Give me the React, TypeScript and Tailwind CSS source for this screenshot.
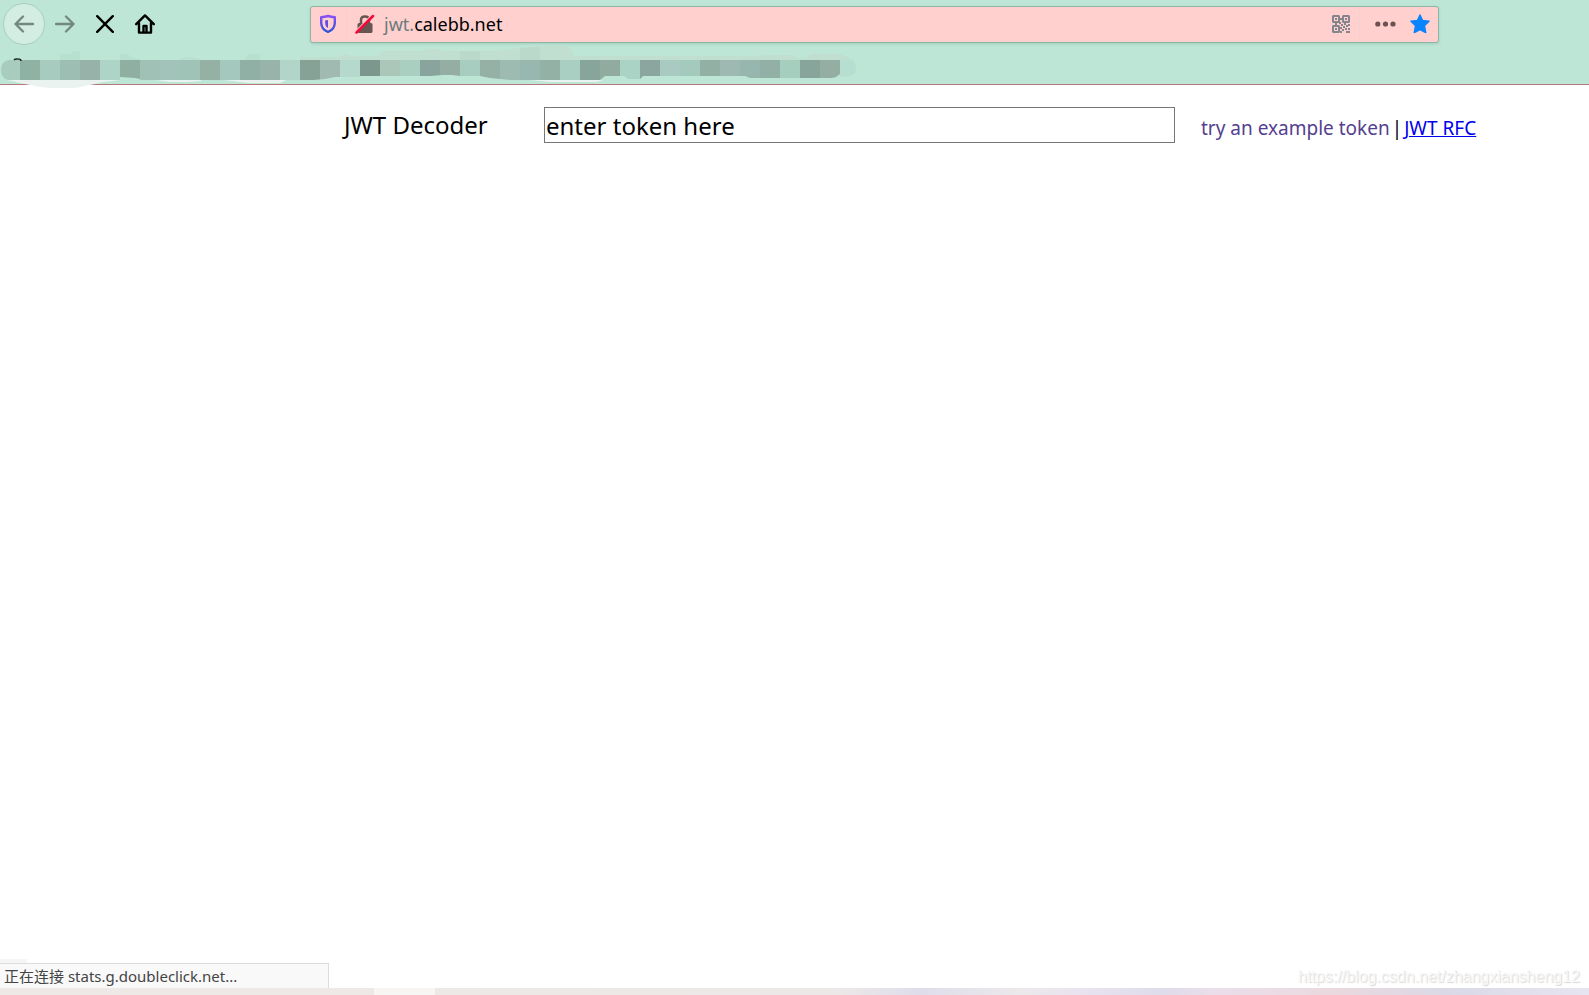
import { useState } from "react";

const mosaic = [
  "#90b2a5", "#a8cbbf", "#9dbeb3", "#97b2a9", "#aed3c7", "#8fafa3", "#a0c1b5", "#a2c3b9", "#a0c3b7", "#95b1a6",
  "#a4c8bd", "#90b0a6", "#97b3aa", "#b1d6c9", "#86a297", "#a0bab2", "#b5dacd", "#7c978e", "#abc7b9", "#a9cfc1",
  "#88a49c", "#94aea3", "#a6cdc0", "#95b0a5", "#9dbbb1", "#98b8af", "#94b1a5", "#a8cfc2", "#88a59c", "#91aba0",
  "#abd3c5", "#8aa69e", "#a8cac0", "#a4c9bd", "#93b0a5", "#9eb8b2", "#97b7ae", "#92b0a5", "#a6cebf", "#88a59c",
  "#94aea4",
];

const BookmarksBlur = () => (
  <svg className="block shrink-0" width="860" height="48" viewBox="0 40 860 48" overflow="visible" aria-hidden="true">
    <defs>
      <clipPath id="smear">
        <path d="M20 60H840V74L836 77L832 78H750L745 76H643L640 79H628L624 76H605L600 80H510L490 78L480 76H460L452 75H443L430 76H360V77H335L325 79L314 80H140V79L135 78L120 77V80H20Z" />
      </clipPath>
    </defs>
    <path d="M60 60V54H70L74 51H80V60ZM120 60V54H127L134 58L141 60ZM180 60V58L190 57L200 59V60ZM244 60L249 54H260V60Z" fill="#b7e0d1" />
    <path d="M300 60V57H338L346 54L352 56H378L384 51H422L428 49H438L443 51H495L520 48L540 46H565L572 50L574 56H760L765 55H790L798 58H805L812 54H840L850 58V60Z" fill="#c1dfd1" />
    <path d="M460 51H480V60H460ZM520 48L540 47V60H520Z" fill="#bbd9cb" />
    <path d="M6 80H120L113 81L103 82L95 84L85 86L76 88H50L40 87L30 85L20 83L12 81Z" fill="#ebf3f0" />
    <path d="M156 80H201V81L188 82H170ZM224 80L240 82L248 83H280L286 80ZM530 80H603L597 82H550Z" fill="#ebf3f0" />
    <path d="M20 60H8Q1 62 1 70Q1 78 8 80H20Z" fill="#a8cdbf" />
    <path d="M840 60H852Q856 62 856 68Q856 76 846 77L840 76Z" fill="#b7dfd1" />
    <g clipPath="url(#smear)" shapeRendering="crispEdges">
      {mosaic.map((fill, i) => (
        <rect key={i} x={20 + i * 20} y="60" width="20" height="20" fill={fill} />
      ))}
    </g>
    <path d="M14 60Q15 58.600 18 59Q21 59 21 61" fill="none" stroke="#1b2b26" strokeWidth="1.500" />
  </svg>
);

const AddressBar = () => (
  <div className="mr-[150px] ml-[145px] flex h-[37px] min-w-0 flex-1 items-center rounded-[3px] border border-[#8fb5a7] bg-[#ffd0ce] px-2 shadow-[0_1px_3px_rgba(0,60,40,0.15)]">
    <button type="button" aria-label="Tracking protection" className="flex shrink-0">
      <svg width="18" height="20" viewBox="0 0 18 20" fill="none">
        <defs>
          <linearGradient id="shield" x1="0" y1="0" x2="0" y2="1">
            <stop offset="0" stopColor="#8a50f5" />
            <stop offset="1" stopColor="#2b54d4" />
          </linearGradient>
        </defs>
        <path d="M9 2Q12 3 15.800 3.300V9Q15.500 15.500 9 18Q2.500 15.500 2.200 9V3.300Q6 3 9 2Z" stroke="url(#shield)" strokeWidth="2.400" strokeLinejoin="round" />
        <path d="M9 6V14Q6.200 12.500 6.200 9V6.300Q8 6.400 9 6Z" fill="#5a50e6" />
      </svg>
    </button>
    <span className="ml-[9px] h-[26px] w-px shrink-0 bg-[#efd2d0]" />
    <button type="button" aria-label="Connection is not secure" className="ml-2 flex shrink-0">
      <svg width="20" height="20" viewBox="0 0 20 20" fill="none">
        <path d="M6 9V6Q6 2.500 10 2.500Q14 2.500 14 6V9" stroke="#665551" strokeWidth="2.500" />
        <rect x="2.500" y="9" width="15" height="10" rx="1.500" fill="#665551" />
        <path d="M0.500 17.500L17 1" stroke="#ffd0ce" strokeWidth="1.500" />
        <path d="M1.500 18.500L18 2" stroke="#f5093d" strokeWidth="2.500" strokeLinecap="round" />
      </svg>
    </button>
    <div className="ml-[9px] min-w-0 flex-1 text-[18px] text-black">
      <span className="text-[#6b7b7b]">jwt.</span>calebb.net
    </div>
    <button type="button" aria-label="QR code" className="flex shrink-0">
      <svg width="18" height="18" viewBox="0 0 18 18" fill="#85868d">
        <path d="M1 0H7L8 1V7L7 8H1L0 7V1ZM2 2V6H6V2ZM11 0H17L18 1V7L17 8H11L10 7V1ZM12 2V6H16V2ZM1 10H7L8 11V17L7 18H1L0 17V11ZM2 12V16H6V12Z" fillRule="evenodd" />
        <path d="M3 3H5V5H3ZM13 3H15V5H13ZM3 13H5V15H3ZM8 3H10V5H8ZM3 8H5V10H3ZM7 7H9V9H7ZM9 9H11V11H9ZM12 8H14V10H12ZM16 9H18V11H16ZM14 10H16V12H14ZM11 11H13V13H11ZM8 12H10V14H8ZM16 13H18V15H16ZM13 13H15V15H13ZM10 14H12V16H10ZM14 16H18V18H14ZM8 16H10V18H8Z" />
      </svg>
    </button>
    <span className="ml-[9px] h-[26px] w-px shrink-0 bg-[#efd2d0]" />
    <button type="button" aria-label="Page actions" className="ml-[15px] flex shrink-0">
      <svg width="21" height="6" viewBox="0 0 21 6" fill="#6b5252">
        <circle cx="2.800" cy="3" r="2.600" />
        <circle cx="10.500" cy="3" r="2.600" />
        <circle cx="18" cy="3" r="2.600" />
      </svg>
    </button>
    <button type="button" aria-label="Edit bookmark" className="ml-[14px] flex shrink-0">
      <svg width="20" height="20" viewBox="0 0 20 20" fill="#0a84ff" stroke="#0a84ff" strokeWidth="1.500" strokeLinejoin="round">
        <path d="M10 1L12.600 6.600L19 7.300L14.400 11.700L15.700 18.500L10 15.500L4.300 18.500L5.600 11.700L1 7.300L7.400 6.600Z" />
      </svg>
    </button>
  </div>
);

const BrowserChrome = () => (
  <header className="h-[85px] border-b border-[#b97777] bg-[#bde6d6]">
    <nav className="flex h-12 items-center pl-[3px]">
      <button type="button" aria-label="Back" className="flex size-[42px] shrink-0 items-center justify-center rounded-full border border-[#a8cfc0] bg-[#d3ede3]">
        <svg width="20" height="18" viewBox="0 0 20 18" fill="none" stroke="#71897f" strokeWidth="2.300" strokeLinecap="round" strokeLinejoin="round">
          <path d="M19 9H1.500M9 1.500L1.500 9L9 16.500" />
        </svg>
      </button>
      <button type="button" aria-label="Forward" className="flex h-10 w-10 shrink-0 items-center justify-center">
        <svg width="20" height="18" viewBox="0 0 20 18" fill="none" stroke="#71897f" strokeWidth="2.300" strokeLinecap="round" strokeLinejoin="round">
          <path d="M1 9H18.500M11 1.500L18.500 9L11 16.500" />
        </svg>
      </button>
      <button type="button" aria-label="Stop" className="flex h-10 w-10 shrink-0 items-center justify-center">
        <svg width="18" height="18" viewBox="0 0 18 18" fill="none" stroke="#000" strokeWidth="2.400" strokeLinecap="round">
          <path d="M1.200 1.200L16.800 16.800M16.800 1.200L1.200 16.800" />
        </svg>
      </button>
      <button type="button" aria-label="Home" className="flex h-10 w-10 shrink-0 items-center justify-center">
        <svg width="20" height="20" viewBox="0 0 20 20" fill="none" stroke="#000" strokeWidth="2.400" strokeLinecap="round" strokeLinejoin="round">
          <path d="M1.200 10.200L10 1.400L18.800 10.200M4 9V18.600H16V9" />
          <path d="M8.500 18V12H11.500V18" />
        </svg>
      </button>
      <AddressBar />
    </nav>
    <div className="-mt-2 h-[44px]">
      <BookmarksBlur />
    </div>
  </header>
);

export default function App() {
  const [token, setToken] = useState("enter token here");

  return (
    <div className="flex min-h-screen flex-col bg-white font-['Noto_Sans','Noto_Sans_CJK_SC',sans-serif] text-black">
      <BrowserChrome />

      <main className="flex-1 pt-[22px]">
        <div className="grid grid-cols-[343fr_201fr_631fr_414fr] items-center">
          <label htmlFor="token" className="col-start-2 pl-px text-2xl whitespace-nowrap">JWT Decoder</label>
          <input
            id="token"
            type="text"
            value={token}
            onChange={(e) => setToken(e.target.value)}
            className="h-9 w-full min-w-0 border border-[#767676] bg-white px-px text-2xl outline-none"
          />
          <div className="flex gap-0.5 pt-1.5 pl-[26px] text-[19px] leading-6 whitespace-nowrap">
            <a href="#example" className="text-[#54408f]">try an example token</a>
            <span>|</span>
            <a href="#rfc" className="text-[#0000ee] underline">JWT RFC</a>
          </div>
        </div>
      </main>

      <footer>
        <div className="flex items-end justify-between">
          <div className="w-[329px]">
            <div className="h-1 w-[27px] bg-[#f5f5f5]" />
            <div className="h-[25px] border-t border-r border-[#dcdcdc] bg-[#f9f9f9] pl-1 text-[15px] leading-6 text-[#444]">
              正在连接 stats.g.doubleclick.net...
            </div>
          </div>
          <div className="pr-[9px] font-['Liberation_Sans',sans-serif] text-base leading-[22px] text-[#f7f7f7] [text-shadow:1px_1px_1px_#d8d8d8]">
            https://blog.csdn.net/zhangxiansheng12
          </div>
        </div>
        <div className="flex h-[7px]">
          <div className="w-[374px] bg-[#eee9e6]" />
          <div className="w-[61px] bg-[#f7f6f4]" />
          <div className="flex-1 bg-[linear-gradient(90deg,#ede9e6_0%,#ece8e8_35%,#dfddeb_42%,#ece9eb_51%,#e8e3f0_56%,#dfdceb_63%,#ebdeea_68%,#ead9de_78%,#dad9e7_88%,#e7e5f1_100%)]" />
        </div>
      </footer>
    </div>
  );
}
